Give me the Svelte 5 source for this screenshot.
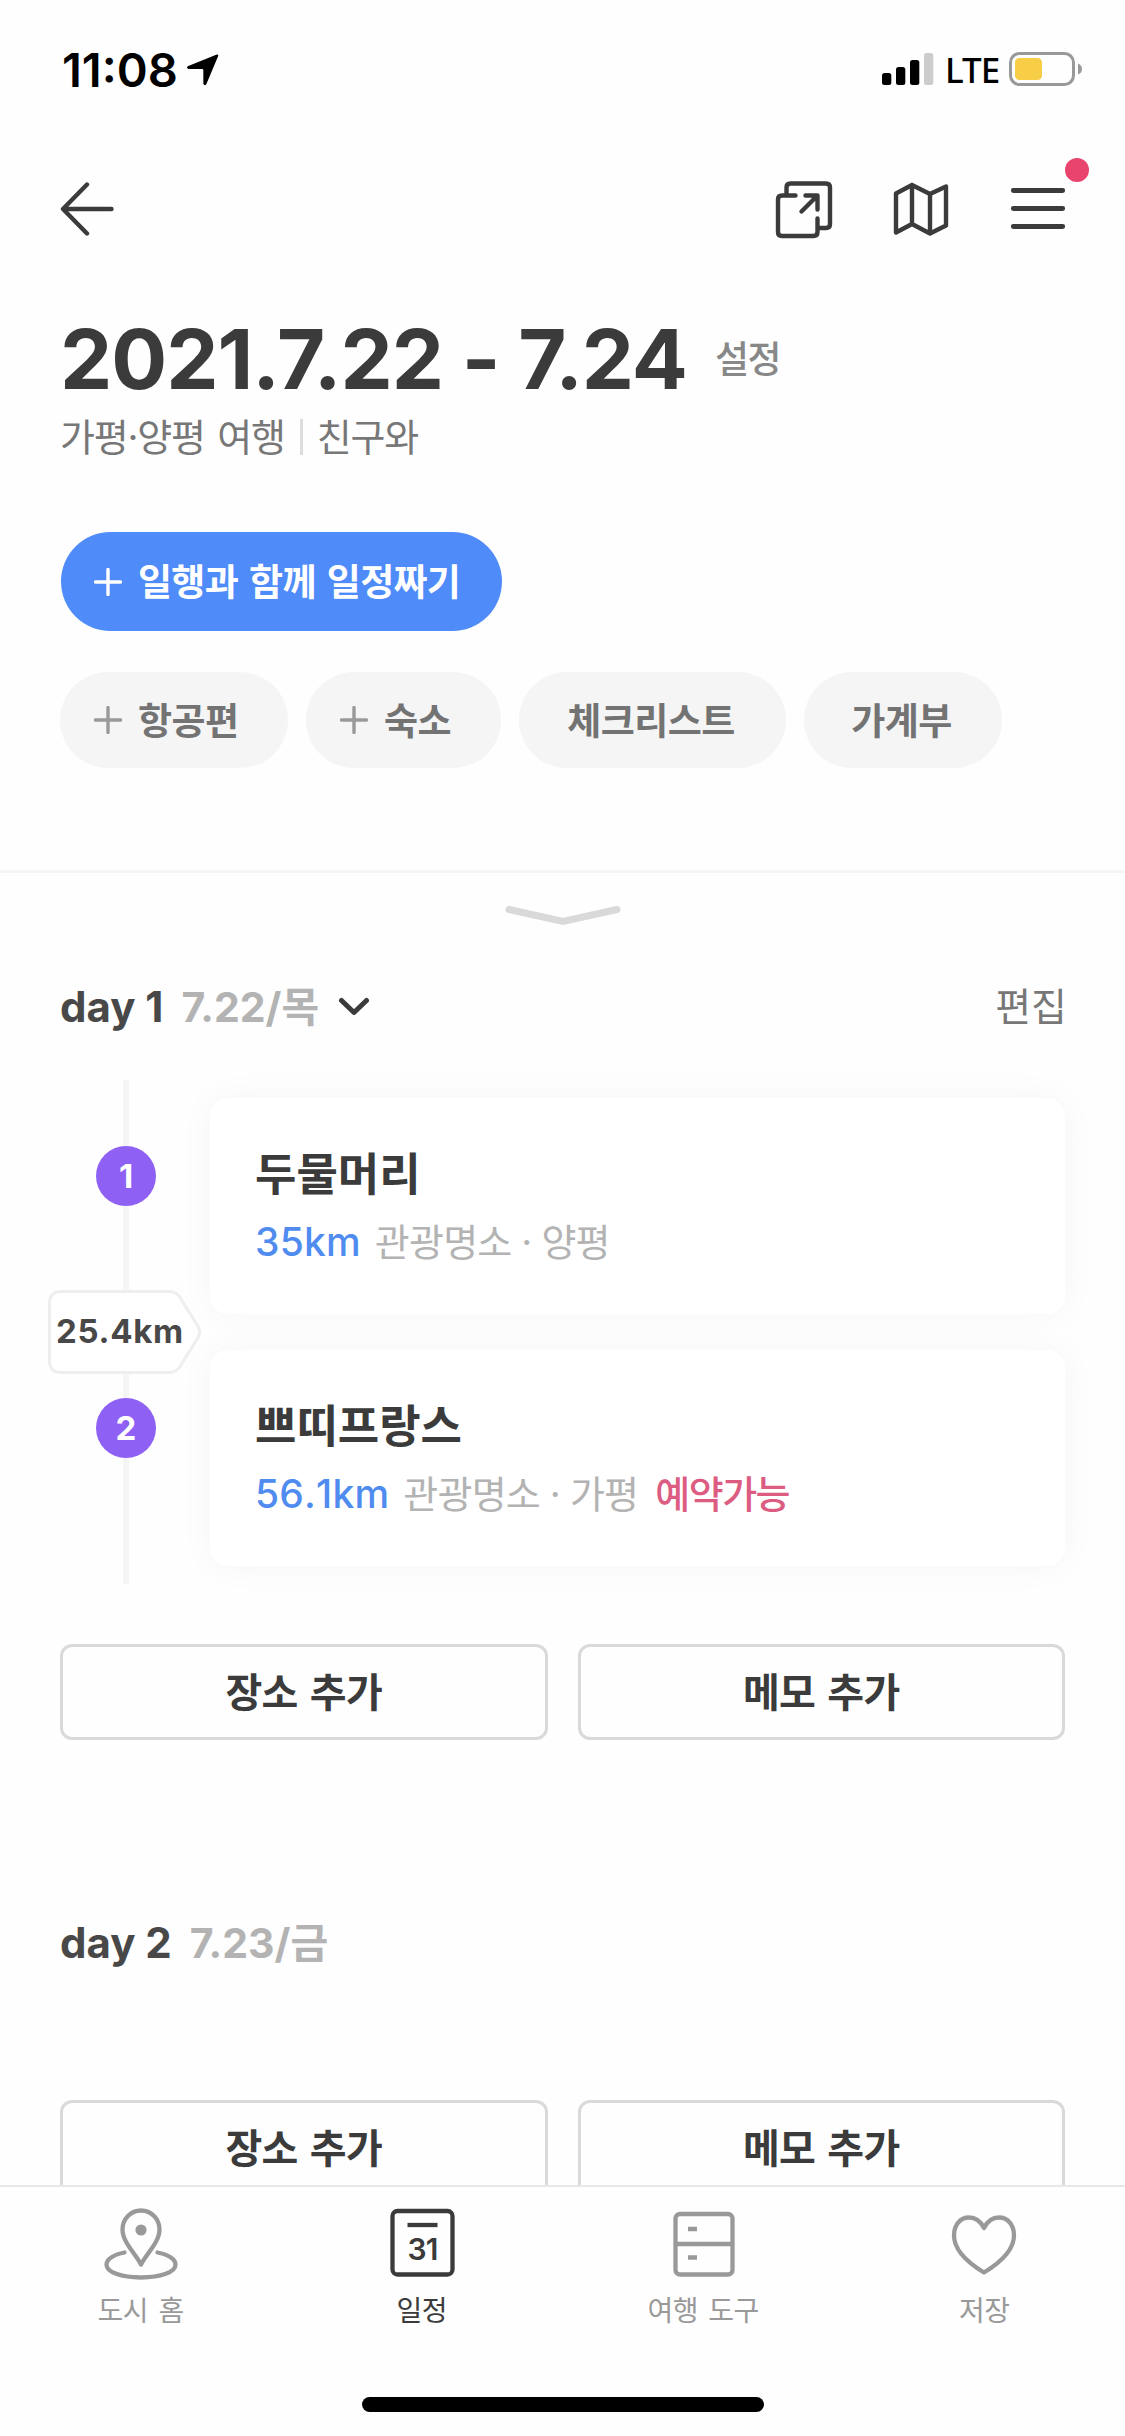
<script>
  const chips = [
    { label: '항공편', plus: true, width: 228 },
    { label: '숙소', plus: true, width: 195 },
    { label: '체크리스트', plus: false, width: 267 },
    { label: '가계부', plus: false, width: 198 }
  ];
  const stops = [
    { n: 1, name: '두물머리', distance: '35km', kind: '관광명소', area: '양평', bookable: false },
    { n: 2, name: '쁘띠프랑스', distance: '56.1km', kind: '관광명소', area: '가평', bookable: true }
  ];
</script>

{#snippet plusIcon()}
  <svg class="plus" viewBox="0 0 28 28"><path d="M14 1.5v25M1.5 14h25" /></svg>
{/snippet}

{#snippet addButtons()}
  <div class="actions">
    <button>장소 추가</button>
    <button>메모 추가</button>
  </div>
{/snippet}

<div class="screen">
  <main>
    <div class="status">
      <span class="time">11:08</span>
      <svg class="loc" viewBox="0 0 32 32"><path d="M29.3 1.600Q32 .6 31 3.400L19.800 30Q18 32.600 16.800 29.600V16.600Q16.800 15.400 15.600 15.400H2.600Q-.6 14.200 2.200 12.600Z" /></svg>
      <svg class="signal" viewBox="0 0 52 34">
        <rect x="0" y="21" width="9.300" height="12" rx="2.500" />
        <rect x="14" y="15" width="9.300" height="18" rx="2.500" />
        <rect x="28" y="8" width="9.300" height="25" rx="2.500" />
        <rect class="off" x="42" y="1" width="9.300" height="32" rx="2.500" />
      </svg>
      <span class="lte">LTE</span>
      <svg class="battery" viewBox="0 0 74 34">
        <rect class="shell" x="1.500" y="1.500" width="63" height="31" rx="9" />
        <rect class="charge" x="6" y="6" width="27" height="22" rx="4.500" />
        <path class="nub" d="M69 11.500q4 1.500 4 5.500t-4 5.500z" />
      </svg>
    </div>

    <nav>
      <svg class="icon back" viewBox="0 0 60 60"><path d="M27 5.500L3 30L27 54.500M3.500 30H51.500" /></svg>
      <div class="tools">
        <svg class="icon" viewBox="0 0 60 60">
          <path d="M12.500 16V8.500Q12.500 4.500 16.500 4.500H52Q56 4.500 56 8.500V45Q56 49 52 49H44" />
          <path d="M21.500 16.500H8Q4 16.500 4 20.500V53Q4 57 8 57H39.500Q43.500 57 43.500 53V39.500" />
          <path d="M31.500 16.500H43.500V30.500M43 17L27.500 32.500" />
        </svg>
        <svg class="icon" viewBox="0 0 60 60">
          <path d="M5 14.500L21 6L39 15L55 7.500V46.500L39 54.500L21 45L5 53.500ZM21 6V45M39 15V54.500" />
        </svg>
        <div class="menu">
          <svg class="icon" viewBox="0 0 60 60"><path class="bars" d="M5.300 11.500H54.700M5.300 29.500H54.700M5.300 47.500H54.700" /></svg>
          <i class="dot"></i>
        </div>
      </div>
    </nav>

    <div class="title">
      <h1>2021.7.22 - 7.24</h1>
      <a class="settings">설정</a>
    </div>
    <div class="sub"><span>가평·양평 여행</span><i></i><span>친구와</span></div>

    <button class="invite">{@render plusIcon()}<span>일행과 함께 일정짜기</span></button>
    <div class="chips">
      {#each chips as chip}
        <button class="chip" class:centered={!chip.plus} style:width="{chip.width}px">
          {#if chip.plus}{@render plusIcon()}{/if}<span>{chip.label}</span>
        </button>
      {/each}
    </div>

    <div class="handle">
      <svg viewBox="0 0 118 24"><path d="M5 6.500L59 18.500L113 6.500" /></svg>
    </div>

    <div class="day">
      <b>day 1</b><span class="date">7.22/<em>목</em></span>
      <svg class="chev" viewBox="0 0 32 20"><path d="M3.500 3.500L16 15.500L28.500 3.500" /></svg>
      <a class="edit">편집</a>
    </div>

    <div class="timeline">
      {#each stops as stop}
        <div class="stop">
          <div class="marker"><span>{stop.n}</span></div>
          <div class="card">
            <h2>{stop.name}</h2>
            <p>
              <span class="dist">{stop.distance}</span><span>{stop.kind} · {stop.area}</span>{#if stop.bookable}<span class="book">예약가능</span>{/if}
            </p>
          </div>
        </div>
      {/each}
      <div class="leg">
        <svg viewBox="0 0 156 84"><path d="M13.500 1.500H121Q128 1.500 132 7.500L150 36.500Q153 42 150 47.500L132 76.500Q128 82.500 121 82.500H13.500Q1.500 82.500 1.500 70.500V13.500Q1.500 1.500 13.500 1.500Z" /></svg>
        <span>25.4km</span>
      </div>
    </div>
    {@render addButtons()}

    <div class="day second">
      <b>day 2</b><span class="date">7.23/<em>금</em></span>
    </div>
    {@render addButtons()}
  </main>

  <footer>
    <div class="tabs">
      <div class="tab">
        <svg viewBox="0 0 80 76">
          <path d="M40 58.500C35 48 21.500 36.500 21.500 23.500A18.500 19 0 0 1 58.500 23.500C58.500 36.500 45 48 40 58.500Z" />
          <path d="M23.500 46.500C13 48.500 5.500 53 5.500 58.500C5.500 66 20 71.500 40 71.500S74.500 66 74.500 58.500C74.500 53 67 48.500 56.500 46.500" />
          <circle class="solid" cx="40" cy="24" r="5.600" />
        </svg>
        <span>도시 홈</span>
      </div>
      <div class="tab active">
        <svg viewBox="0 0 80 76">
          <rect x="10.500" y="5" width="60" height="63.500" rx="5" />
          <path class="square" d="M25.500 19H55.500" />
          <text x="40.500" y="53.500" text-anchor="middle">31</text>
        </svg>
        <span>일정</span>
      </div>
      <div class="tab">
        <svg viewBox="0 0 80 76">
          <rect x="12.500" y="8" width="57" height="60.500" rx="4.500" />
          <path class="square" d="M12.500 38H69.500M25 23H34M25 51.500H34" />
        </svg>
        <span>여행 도구</span>
      </div>
      <div class="tab">
        <svg viewBox="0 0 80 76">
          <path d="M40 22C36.500 15 31 11.500 25 11.500C16 11.500 10 19 10 29.500C10 46 26 58 40 66.500C54 58 70 46 70 29.500C70 19 64 11.500 55 11.500C49 11.500 43.500 15 40 22Z" />
        </svg>
        <span>저장</span>
      </div>
    </div>
    <div class="home"></div>
  </footer>
</div>

<style>
  :global(body) { margin: 0; background: #fff; }
  .screen {
    width: 1125px; height: 2436px; display: flex; flex-direction: column;
    overflow: hidden; background: #fefefe; color: #3b3b3b;
    font-family: Inter, 'Noto Sans CJK KR', sans-serif;
  }
  main { height: 2185px; flex: none; overflow: hidden; display: flex; flex-direction: column; }
  main > * { flex: none; }
  button { font: inherit; color: inherit; border: 0; margin: 0; padding: 0; background: none; white-space: nowrap; }
  svg { display: block; flex: none; fill: none; }
  i, em { font-style: normal; }

  .status { height: 138px; display: flex; align-items: center; padding: 0 42px 0 62px; box-sizing: border-box; color: #000; }
  .time { font-size: 47px; font-weight: 600; letter-spacing: 0; }
  .loc { width: 33px; height: 33px; margin-left: 8px; fill: #000; }
  .signal { width: 52px; height: 34px; margin-left: auto; fill: #000; }
  .signal .off { fill: #ccc; }
  .lte { width: 51px; font-family: 'Noto Sans', sans-serif; font-size: 35px; line-height: 40px; font-weight: 500; letter-spacing: -1px; margin: 2px 13px 0 11px; }
  .battery { width: 74px; height: 34px; }
  .shell { stroke: #999; stroke-width: 3; }
  .charge { fill: #f7ce46; }
  .nub { fill: #999; }

  nav { height: 142px; display: flex; align-items: center; justify-content: space-between; padding: 0 57px 0 60px; }
  .icon { width: 60px; height: 60px; stroke: #3b3b3b; stroke-width: 4.400; stroke-linecap: round; stroke-linejoin: round; }
  .bars { stroke-width: 4.900; }
  .tools { display: flex; gap: 57px; }
  .menu { position: relative; }
  .dot { position: absolute; left: 57px; top: -21px; width: 24px; height: 24px; border-radius: 50%; background: #e9446d; }

  .title { height: 100px; margin: 29px 0 0 60px; display: flex; align-items: center; }
  h1 { margin: 0; font-size: 83px; font-weight: 700; letter-spacing: -1px; white-space: pre; }
  .settings { font-size: 37px; font-weight: 500; color: #888; letter-spacing: -1.500px; margin: 0 0 4px 28px; }
  .sub { height: 56px; margin-left: 60px; display: flex; align-items: center; font-size: 38px; color: #777; letter-spacing: -1.200px; word-spacing: 3px; }
  .sub span { padding-bottom: 5px; }
  .sub i { width: 3px; height: 36px; background: #ddd; margin: 0 14px 0 15px; }

  .plus { width: 28px; height: 28px; stroke: currentColor; stroke-width: 3.400; stroke-linecap: round; }
  .invite {
    margin: 67px 0 0 61px; width: 441px; height: 99px; border-radius: 50px; background: #4f8cf9; color: #fff;
    display: flex; align-items: center; padding-left: 33px; gap: 16px; font-size: 37px; font-weight: 700; letter-spacing: -.7px; word-spacing: 3px;
  }
  .chips { display: flex; gap: 18px; margin: 41px 0 0 60px; }
  .chip {
    height: 96px; border-radius: 48px; background: #f5f5f5; color: #737373; display: flex; align-items: center;
    box-sizing: border-box; padding-left: 34px; gap: 16px; font-size: 37px; font-weight: 700; letter-spacing: -.5px;
  }
  .invite span, .chip span { padding-bottom: 3px; }
  .chip.centered { padding: 0 3px 0 0; justify-content: center; }
  .chip .plus { color: #999; }

  .handle { margin-top: 102px; border-top: 3px solid #f5f5f5; height: 84px; display: flex; align-items: center; justify-content: center; }
  .handle svg { width: 118px; height: 24px; stroke: #d9d9d9; stroke-width: 7; stroke-linecap: round; }

  .day { height: 99px; padding: 0 58px 0 60px; display: flex; align-items: center; font-size: 41px; }
  .day b { font-size: 42px; font-weight: 650; color: #484848; letter-spacing: 0; }
  .date { font-weight: 650; color: #b3b3b3; margin-left: 18px; line-height: 50px; }
  .date em { font-weight: 700; line-height: 0; }
  .chev { width: 32px; height: 20px; margin-left: 19px; stroke: #3b3b3b; stroke-width: 5; stroke-linecap: round; stroke-linejoin: round; }
  .edit { margin-left: auto; font-size: 39px; color: #777; padding-bottom: 5px; }
  .second { margin-top: 153px; }

  .timeline {
    position: relative; margin: 24px 60px 0; padding: 18px 0; display: flex; flex-direction: column; gap: 36px;
    background: linear-gradient(#f5f5f5, #f5f5f5) 63px 0 / 6px 100% no-repeat;
  }
  .stop { display: flex; height: 216px; }
  .marker { width: 132px; margin-right: 18px; padding-top: 48px; display: flex; justify-content: center; align-items: flex-start; flex: none; }
  .marker span { width: 60px; height: 60px; border-radius: 50%; background: #8e60f4; color: #fff; font-size: 33px; font-weight: 700; line-height: 60px; text-align: center; }
  .card { flex: 1; border-radius: 18px; background: #fff; box-shadow: 0 0 36px rgba(0, 0, 0, .04); padding: 44px 0 0 45px; }
  h2 { margin: 0; font-size: 45px; line-height: 66px; font-weight: 700; letter-spacing: 0; }
  .card p { margin: 1px 0 0; height: 66px; line-height: 66px; display: flex; font-size: 38px; color: #b3b3b3; letter-spacing: -.8px; }
  .card .dist { color: #508cf0; font-weight: 500; font-size: 39px; letter-spacing: .2px; margin-right: 14px; font-kerning: none; }
  .card .book { color: #dc5c82; font-weight: 500; margin-left: 17px; letter-spacing: -1.500px; }
  .leg { position: absolute; left: -12px; top: 210px; width: 156px; height: 84px; display: grid; }
  .leg svg { grid-area: 1 / 1; width: 156px; height: 84px; fill: #fff; stroke: #eee; stroke-width: 3; }
  .leg span { grid-area: 1 / 1; line-height: 83px; padding-left: 8px; font-size: 33px; font-weight: 650; color: #484848; letter-spacing: .7px; }

  .actions { display: flex; gap: 30px; margin: 60px 60px 0; }
  .second + .actions { margin-top: 108px; }
  .actions button { flex: 1; height: 96px; box-sizing: border-box; border: 3px solid #d9d9d9; border-radius: 12px; padding-bottom: 5px; font-size: 40px; font-weight: 700; letter-spacing: -.6px; word-spacing: 3px; }

  footer { flex: 1; box-sizing: border-box; border-top: 2px solid #e8e8e8; display: flex; flex-direction: column; align-items: center; background: #fefefe; }
  .tabs { width: 1125px; height: 210px; display: flex; }
  .tab { flex: 1; display: flex; flex-direction: column; align-items: center; padding-top: 19px; color: #999; font-size: 28px; letter-spacing: -.5px; word-spacing: 3px; }
  .tab svg { width: 80px; height: 76px; stroke: currentColor; stroke-width: 4.300; stroke-linecap: round; stroke-linejoin: round; }
  .tab span { line-height: 40px; margin-top: 9px; }
  .tab .square { stroke-linecap: butt; }
  .tab .solid { fill: currentColor; stroke: none; }
  .tab text { fill: currentColor; stroke: none; font-size: 30px; font-weight: 600; letter-spacing: -1px; }
  .tab.active { color: #3b3b3b; }
  .home { width: 402px; height: 15px; border-radius: 8px; background: #000; }
</style>
